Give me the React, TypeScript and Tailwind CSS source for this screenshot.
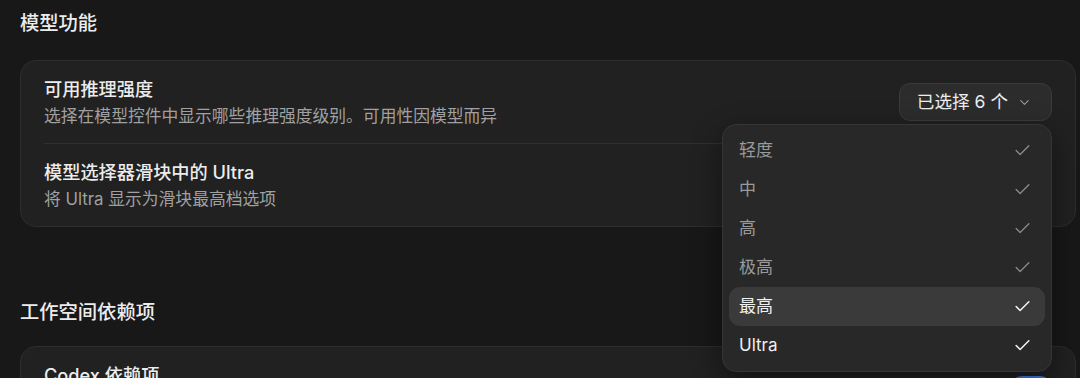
import { Check, ChevronDown } from "lucide-react";

const levels = [
  { label: "轻度", active: false },
  { label: "中", active: false },
  { label: "高", active: false },
  { label: "极高", active: false },
  { label: "最高", active: true, highlighted: true },
  { label: "Ultra", active: true },
];

function Toggle({ on }: { on: boolean }) {
  return (
    <div
      className={`w-[42px] h-[24px] rounded-full flex items-center px-[2px] ${
        on ? "bg-[#3f7ee8] justify-end" : "bg-[#3a3a3a] justify-start"
      }`}
    >
      <div className="w-[20px] h-[20px] rounded-full bg-white" />
    </div>
  );
}

function EffortMenu() {
  return (
    <div className="absolute right-0 top-full mt-[3px] w-[330px] z-20 rounded-[14px] border border-[#353535] bg-[#282828] p-[6px] shadow-[0_10px_30px_rgba(0,0,0,0.45)]">
      {levels.map((l) => (
        <div
          key={l.label}
          className={`h-[39px] flex items-center justify-between pl-[10px] pr-[13px] rounded-[11px] ${
            l.highlighted ? "bg-[#3a3a3a]" : ""
          }`}
        >
          <span className={`text-[17px] ${l.active ? "text-[#f0f0f0]" : "text-[#9a9a9a]"}`}>
            {l.label}
          </span>
          <Check
            size={19}
            strokeWidth={l.active ? 2 : 1.6}
            className={l.active ? "text-[#f2f2f2]" : "text-[#8c8c8c]"}
          />
        </div>
      ))}
    </div>
  );
}

export default function App() {
  return (
    <div className="w-[1080px] h-[378px] overflow-hidden bg-[#181818] font-['Inter','Noto_Sans_CJK_SC',sans-serif] text-[#ececec] pl-5 pr-1 pt-[10px]">
      <h2 className="text-[19.3px] leading-[26px] font-medium mb-6">模型功能</h2>

      <div className="rounded-[16px] border border-[#2d2d2d] bg-[#212121] px-[23px]">
        <div className="flex items-center justify-between py-[15px] border-b border-[#303030]">
          <div>
            <p className="text-[18.2px] leading-[26px] font-medium">可用推理强度</p>
            <p className="text-[16.8px] leading-[24px] mt-[2px] text-[#a0a0a0]">
              选择在模型控件中显示哪些推理强度级别。可用性因模型而异
            </p>
          </div>
          <div className="relative">
            <button className="h-[38px] flex items-center gap-[9px] pl-[17px] pr-[19px] rounded-[11px] border border-[#3b3b3b] bg-[#2c2c2c] text-[17.6px] text-[#ededed]">
              已选择 6 个
              <ChevronDown size={15} strokeWidth={1.8} className="text-[#9a9a9a]" />
            </button>
            <EffortMenu />
          </div>
        </div>
        <div className="flex items-center justify-between py-[15px]">
          <div>
            <p className="text-[18.2px] leading-[26px] font-medium">模型选择器滑块中的 Ultra</p>
            <p className="text-[16.8px] leading-[24px] mt-[2px] text-[#a0a0a0]">
              将 Ultra 显示为滑块最高档选项
            </p>
          </div>
          <Toggle on={false} />
        </div>
      </div>

      <h2 className="text-[19.3px] leading-[26px] font-medium mt-[72px] mb-[21px]">工作空间依赖项</h2>

      <div className="rounded-[16px] border border-[#2d2d2d] bg-[#212121] px-[23px]">
        <div className="flex items-center justify-between py-[15px]">
          <div>
            <p className="text-[18.2px] leading-[26px] font-medium">Codex 依赖项</p>
            <p className="text-[16.8px] leading-[24px] mt-[2px] text-[#a0a0a0]">
              允许 Codex 安装并管理工作空间依赖项
            </p>
          </div>
          <Toggle on={true} />
        </div>
      </div>
    </div>
  );
}
